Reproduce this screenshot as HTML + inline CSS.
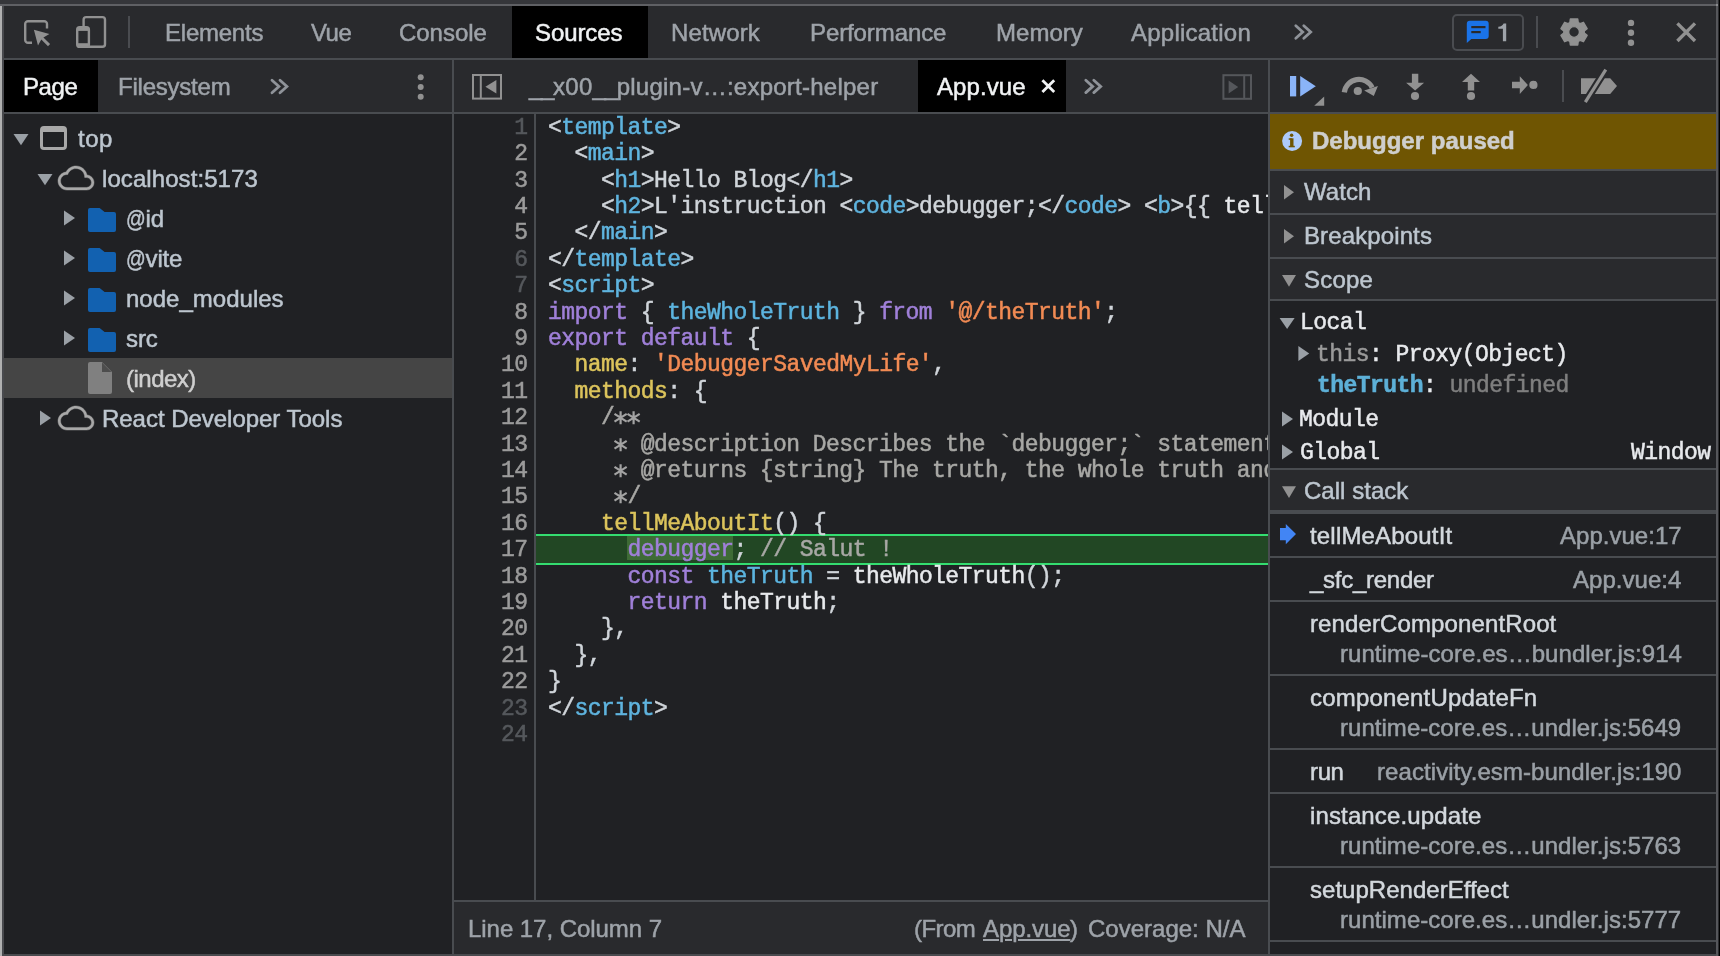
<!DOCTYPE html>
<html>
<head>
<meta charset="utf-8">
<title>DevTools - Sources</title>
<style>
*{box-sizing:border-box;margin:0;padding:0}
html,body{width:1720px;height:956px;overflow:hidden;background:#202124}
body{position:relative;font-family:"Liberation Sans",sans-serif;font-size:24px;color:#bdc6cf;line-height:28px}
.bx{position:absolute}
.t{position:absolute;white-space:pre;height:28px;line-height:28px;will-change:transform;-webkit-text-stroke:0.5px}
.tab{color:#9ea3a9}
.w{color:#f1f3f4}
.dim{color:#9aa0a6}
.m{font-family:"Liberation Mono",monospace;font-size:23px;letter-spacing:-0.558px;position:absolute;white-space:pre;height:26px;line-height:26px;color:#e8eaed;will-change:transform;-webkit-text-stroke:0.5px}
svg{position:absolute;overflow:visible}
.ln{position:absolute;left:454px;width:73.4px;text-align:right;font-family:"Liberation Mono",monospace;font-size:23px;letter-spacing:-0.558px;color:#9b9b9b;height:26px;line-height:26px;white-space:pre;will-change:transform;-webkit-text-stroke:0.5px}
.ln.d{color:#55585c}
.cl{position:absolute;left:548px;font-family:"Liberation Mono",monospace;font-size:23px;letter-spacing:-0.558px;color:#d0d5da;height:26px;line-height:26px;white-space:pre;will-change:transform;-webkit-text-stroke:0.5px}
.tg{color:#5fb4df}
.kw{color:#a080d9}
.st{color:#f28b54}
.df{color:#5cb4df}
.pr{color:#dcc45c}
.cm{color:#a8a8a5}
.wh{color:#e8eaed}
svg.as{position:relative;display:inline-block;vertical-align:top}
.at{display:inline-block;width:19.6px;transform:scaleX(.81);transform-origin:0 50%;letter-spacing:0}
</style>
</head>
<body>
<div class="bx" style="left:0px;top:0px;width:1720px;height:4px;background:#35363a;"></div>
<div class="bx" style="left:0px;top:4px;width:1720px;height:2px;background:#5f6064;"></div>
<div class="bx" style="left:0px;top:6px;width:2px;height:950px;background:#b0b0b0;"></div>
<div class="bx" style="left:2px;top:6px;width:2px;height:950px;background:#494a4e;"></div>
<div class="bx" style="left:4px;top:6px;width:1712px;height:52px;background:#292a2d;"></div>
<div class="bx" style="left:4px;top:58px;width:1712px;height:2px;background:#494c50;"></div>
<div class="bx" style="left:4px;top:60px;width:1712px;height:52px;background:#292a2d;"></div>
<div class="bx" style="left:4px;top:112px;width:1712px;height:2px;background:#494c50;"></div>
<div class="bx" style="left:452px;top:60px;width:2px;height:894px;background:#494c50;"></div>
<div class="bx" style="left:1268px;top:60px;width:2px;height:894px;background:#494c50;"></div>
<div class="bx" style="left:4px;top:954px;width:1714px;height:2px;background:#494a4e;"></div>
<svg style="left:0;top:0" width="120" height="60" viewBox="0 0 120 60" fill="none">
<path d="M47 28.5V24a2.8 2.8 0 0 0-2.8-2.8H28a2.8 2.8 0 0 0-2.8 2.8v16a2.8 2.8 0 0 0 2.8 2.8h4" stroke="#919191" stroke-width="2.4"/>
<path d="M33.9 29.7 49.4 34 43.4 37.4 50.1 44.1 48 46.2 41.3 39.5 38 45.6z" fill="#919191"/>
<rect x="83.6" y="17.1" width="21.4" height="29.7" rx="2.6" stroke="#919191" stroke-width="2.4"/>
<rect x="77.2" y="27.3" width="11.7" height="19.5" rx="2.4" fill="#292a2d" stroke="#919191" stroke-width="2.4"/>
<rect x="77.2" y="27.3" width="11.7" height="3.6" fill="#919191"/>
<rect x="77.2" y="43.2" width="11.7" height="3.6" fill="#919191"/>
</svg>
<div class="bx" style="left:128px;top:16px;width:2px;height:32px;background:#4a4c50;"></div>
<div class="bx" style="left:512px;top:6px;width:136px;height:52px;background:#000;"></div>
<div class="t tab" style="left:165.3px;top:19px;letter-spacing:-0.231px;">Elements</div>
<div class="t tab" style="left:310.5px;top:19px;letter-spacing:-0.538px;">Vue</div>
<div class="t tab" style="left:399.1px;top:19px;letter-spacing:-0.037px;">Console</div>
<div class="t tab" style="left:671.3px;top:19px;letter-spacing:0.138px;">Network</div>
<div class="t tab" style="left:809.8px;top:19px;letter-spacing:-0.099px;">Performance</div>
<div class="t tab" style="left:995.5px;top:19px;letter-spacing:0.021px;">Memory</div>
<div class="t tab" style="left:1130.5px;top:19px;letter-spacing:0.234px;">Application</div>
<div class="t w" style="left:534.7px;top:19px;letter-spacing:-0.092px;">Sources</div>
<svg style="left:0;top:0" width="1720" height="120" fill="none" stroke="#8f9399" stroke-width="2.8" stroke-linecap="round" stroke-linejoin="miter"><path d="M1295.8 25.8l6.9 6.2l-6.9 6.2M1303.8 25.8l6.9 6.2l-6.9 6.2"/></svg>
<div class="bx" style="left:1452px;top:14px;width:72px;height:37px;border:2px solid #4a4c50;border-radius:5px"></div>
<svg style="left:0;top:0" width="1720" height="60"><path d="M1469.8 20.8h15.9a3 3 0 0 1 3 3v12.2a3 3 0 0 1-3 3h-14.4l-4.5 4v-19.2a3 3 0 0 1 3-3z" fill="#1a73e8"/><rect x="1471.3" y="26" width="14.2" height="2.2" fill="#292a2d"/><rect x="1471.3" y="31" width="9.4" height="2.2" fill="#292a2d"/></svg>
<svg style="left:0;top:0" width="1720" height="60"><path d="M1502.9 41.2V28.8h-4.6v-2.1c2.7-.2 4.5-1.2 5.3-3.3h2.6v17.8z" fill="#9ea3a9"/></svg>
<div class="bx" style="left:1536px;top:16px;width:2px;height:32px;background:#4a4c50;"></div>
<svg style="left:0;top:0" width="1720" height="60"><path d="M1569.86 22.59 L1570.35 19.02 L1577.75 19.02 L1578.24 22.59 L1580.10 23.67 L1583.44 22.31 L1587.14 28.71 L1584.29 30.92 L1584.29 33.08 L1587.14 35.29 L1583.44 41.69 L1580.10 40.33 L1578.24 41.41 L1577.75 44.98 L1570.35 44.98 L1569.86 41.41 L1568.00 40.33 L1564.66 41.69 L1560.96 35.29 L1563.81 33.08 L1563.81 30.92 L1560.96 28.71 L1564.66 22.31 L1568.00 23.67Z M1568.6499999999999 32a5.4 5.4 0 1 0 10.8 0a5.4 5.4 0 1 0 -10.8 0Z" fill="#919191" fill-rule="evenodd" stroke="#919191" stroke-width="1.4" stroke-linejoin="round"/></svg>
<svg style="left:0;top:0" width="1720" height="120" fill="#919191"><circle cx="1631" cy="22.9" r="3.2"/><circle cx="1631" cy="32.7" r="3.2"/><circle cx="1631" cy="42.7" r="3.2"/></svg>
<svg style="left:0;top:0" width="1720" height="60" stroke="#919191" stroke-width="3.4"><path d="M1677.4 23.4l17.6 17.6M1695 23.4l-17.6 17.6"/></svg>
<div class="bx" style="left:4px;top:60px;width:94px;height:52px;background:#000;"></div>
<div class="t w" style="left:23.3px;top:73px;letter-spacing:-0.416px;">Page</div>
<div class="t tab" style="left:117.5px;top:73px;letter-spacing:-0.229px;">Filesystem</div>
<svg style="left:0;top:0" width="1720" height="120" fill="none" stroke="#8f9399" stroke-width="2.8" stroke-linecap="round" stroke-linejoin="miter"><path d="M272 80.3l6.9 6.2l-6.9 6.2M280.0 80.3l6.9 6.2l-6.9 6.2"/></svg>
<svg style="left:0;top:0" width="1720" height="120" fill="#919191"><circle cx="420.7" cy="77.3" r="3"/><circle cx="420.7" cy="87" r="3"/><circle cx="420.7" cy="96.8" r="3"/></svg>
<svg style="left:0;top:0" width="1720" height="120" fill="none"><rect x="473" y="75" width="28" height="23.6" stroke="#919191" stroke-width="2"/><path d="M480.8 75v23.6" stroke="#919191" stroke-width="2"/><path d="M485.4 86.7l11-6.8v13.6z" fill="#919191"/></svg>
<div class="t tab" style="left:528.7px;top:73px;letter-spacing:0.245px"><span style="letter-spacing:-1.3px">__</span>x00<span style="letter-spacing:-1.3px">__</span>plugin-v…:export-helper</div>
<div class="bx" style="left:918px;top:60px;width:148px;height:52px;background:#000;"></div>
<div class="t w" style="left:936.7px;top:73px;letter-spacing:0.075px;">App.vue</div>
<svg style="left:0;top:0" width="1720" height="120" stroke="#f1f3f4" stroke-width="2.8"><path d="M1042.4 80.2l11.8 11.8M1054.2 80.2l-11.8 11.8"/></svg>
<svg style="left:0;top:0" width="1720" height="120" fill="none" stroke="#8f9399" stroke-width="2.8" stroke-linecap="round" stroke-linejoin="miter"><path d="M1085.8 80.2l6.9 6.2l-6.9 6.2M1093.8 80.2l6.9 6.2l-6.9 6.2"/></svg>
<svg style="left:0;top:0" width="1720" height="120" fill="none"><rect x="1223.4" y="75.2" width="27.6" height="23.6" stroke="#55575b" stroke-width="2"/><path d="M1244.2 75v23.6" stroke="#55575b" stroke-width="2"/><path d="M1238.2 87l-9.6-6.6v13.2z" fill="#55575b"/></svg>
<svg style="left:0;top:0" width="1720" height="120">
<rect x="1290" y="76" width="6.2" height="20.4" fill="#8ab4f8"/>
<path d="M1300.2 76l15.6 10.2-15.6 10.2z" fill="#8ab4f8"/>
<path d="M1324.2 96.4v9.4h-10z" fill="#919191"/>
<path d="M1344.3 92.4A14.8 14.8 0 0 1 1372.2 87.6" fill="none" stroke="#919191" stroke-width="5.2"/>
<path d="M1377.9 86l-13.7 4.4 9.6 5.6z" fill="#919191"/>
<circle cx="1357.8" cy="91" r="4.1" fill="#919191"/>
<path d="M1411.9 73.8h6.4v9h5.8l-9 7.6-9-7.6h5.8z" fill="#919191"/>
<circle cx="1415" cy="96" r="4.1" fill="#919191"/>
<path d="M1467.8 90.4h6.4v-8.4h5.8l-9-8.2-9 8.2h5.8z" fill="#919191"/>
<circle cx="1471" cy="96" r="4.1" fill="#919191"/>
<path d="M1512 81.8h7.8v-5.6l8.1 8.9-8.1 8.9v-5.8h-7.8z" fill="#919191"/>
<circle cx="1533.4" cy="84.9" r="4.1" fill="#919191"/>
<path d="M1581 78.2h29.2l6.8 7.9-6.8 7.9h-29.2z" fill="#919191"/>
<path d="M1606.6 68.2l-21.7 34.5" stroke="#292a2d" stroke-width="7.4"/>
<path d="M1605.8 69.6l-20.5 32.5" stroke="#919191" stroke-width="3.2"/>
</svg>
<div class="bx" style="left:1562px;top:70px;width:2px;height:32px;background:#4a4c50;"></div>
<!--TREE-->
<div class="bx" style="left:4px;top:358px;width:448px;height:40px;background:#454545;"></div>
<svg style="left:0;top:0" width="460" height="460"><path d="M13.5 134h15l-7.5 11.2z" fill="#9aa0a6"/><rect x="41.5" y="127.5" width="24" height="21" rx="2.5" fill="none" stroke="#a8a8a8" stroke-width="3"/><rect x="41" y="127" width="25" height="5" fill="#a8a8a8"/><path d="M37.5 174h15l-7.5 11.2z" fill="#9aa0a6"/><g transform="translate(58,160) scale(1.5)"><path d="M19.35 10.04C18.67 6.59 15.64 4 12 4 9.11 4 6.6 5.64 5.35 8.04 2.34 8.36 0 10.91 0 14c0 3.31 2.69 6 6 6h13c2.76 0 5-2.24 5-5 0-2.64-2.05-4.78-4.65-4.96zM19 18.3H6c-2.38 0-4.3-1.92-4.3-4.3s1.92-4.3 4.3-4.3h.5C7.2 7.5 9.4 5.7 12 5.7c3.2 0 5.8 2.6 5.8 5.8v.2H19c1.82 0 3.3 1.48 3.3 3.3s-1.48 3.3-3.3 3.3z" fill="#a8a8a8" fill-rule="evenodd" stroke="#a8a8a8" stroke-width="0.3"/></g><path d="M64 210.5v15l11 -7.5z" fill="#9aa0a6"/><path d="M90 208h9.6l5 4h9.4a2 2 0 0 1 2 2v16a2 2 0 0 1-2 2h-24a2 2 0 0 1-2-2v-20a2 2 0 0 1 2-2z" fill="#1261b0"/><path d="M64 250.5v15l11 -7.5z" fill="#9aa0a6"/><path d="M90 248h9.6l5 4h9.4a2 2 0 0 1 2 2v16a2 2 0 0 1-2 2h-24a2 2 0 0 1-2-2v-20a2 2 0 0 1 2-2z" fill="#1261b0"/><path d="M64 290.5v15l11 -7.5z" fill="#9aa0a6"/><path d="M90 288h9.6l5 4h9.4a2 2 0 0 1 2 2v16a2 2 0 0 1-2 2h-24a2 2 0 0 1-2-2v-20a2 2 0 0 1 2-2z" fill="#1261b0"/><path d="M64 330.5v15l11 -7.5z" fill="#9aa0a6"/><path d="M90 328h9.6l5 4h9.4a2 2 0 0 1 2 2v16a2 2 0 0 1-2 2h-24a2 2 0 0 1-2-2v-20a2 2 0 0 1 2-2z" fill="#1261b0"/><path d="M90 362h12l10 10v20a2 2 0 0 1-2 2h-20a2 2 0 0 1-2-2v-28a2 2 0 0 1 2-2z" fill="#808080"/><path d="M102 362.6v9.4h9.4z" fill="#4d4d4d"/><path d="M40 410.5v15l11 -7.5z" fill="#9aa0a6"/><g transform="translate(58,400) scale(1.5)"><path d="M19.35 10.04C18.67 6.59 15.64 4 12 4 9.11 4 6.6 5.64 5.35 8.04 2.34 8.36 0 10.91 0 14c0 3.31 2.69 6 6 6h13c2.76 0 5-2.24 5-5 0-2.64-2.05-4.78-4.65-4.96zM19 18.3H6c-2.38 0-4.3-1.92-4.3-4.3s1.92-4.3 4.3-4.3h.5C7.2 7.5 9.4 5.7 12 5.7c3.2 0 5.8 2.6 5.8 5.8v.2H19c1.82 0 3.3 1.48 3.3 3.3s-1.48 3.3-3.3 3.3z" fill="#a8a8a8" fill-rule="evenodd" stroke="#a8a8a8" stroke-width="0.3"/></g></svg>
<div class="t " style="left:77.5px;top:125px;letter-spacing:0.508px;">top</div>
<div class="t " style="left:101.8px;top:165px;letter-spacing:0.080px;">localhost:5173</div>
<div class="t " style="left:125.6px;top:205px;letter-spacing:-0.243px;"><span class="at">@</span>id</div>
<div class="t " style="left:125.6px;top:245px;letter-spacing:-0.165px;"><span class="at">@</span>vite</div>
<div class="t " style="left:125.9px;top:285px;letter-spacing:0.012px;">node_modules</div>
<div class="t " style="left:125.9px;top:325px;letter-spacing:-0.100px;">src</div>
<div class="t " style="left:125.9px;top:365px;letter-spacing:-0.508px;color:#cfcfcf;">(index)</div>
<div class="t " style="left:102.1px;top:405px;letter-spacing:-0.030px;">React Developer Tools</div>
<!--CODE-->
<div class="bx" style="left:534px;top:114px;width:2px;height:786px;background:#494c50;"></div>
<div class="bx" style="left:536px;top:534px;width:732px;height:2px;background:#34dd70;"></div>
<div class="bx" style="left:536px;top:536px;width:732px;height:27px;background:#224724;"></div>
<div class="bx" style="left:536px;top:563px;width:732px;height:2px;background:#34dd70;"></div>
<div class="bx" style="left:627px;top:536px;width:106px;height:24px;background:#3e6b36;"></div>
<div class="bx" style="left:536px;top:114px;width:732px;height:786px;overflow:hidden">
</div>
<div class="ln d" style="top:115px">1</div><div class="cl" style="top:115px;max-width:720px;overflow:hidden">&lt;<span class="tg">template</span>&gt;</div>
<div class="ln " style="top:141px">2</div><div class="cl" style="top:141px;max-width:720px;overflow:hidden">  &lt;<span class="tg">main</span>&gt;</div>
<div class="ln " style="top:168px">3</div><div class="cl" style="top:168px;max-width:720px;overflow:hidden">    &lt;<span class="tg">h1</span>&gt;Hello Blog&lt;/<span class="tg">h1</span>&gt;</div>
<div class="ln " style="top:194px">4</div><div class="cl" style="top:194px;max-width:720px;overflow:hidden">    &lt;<span class="tg">h2</span>&gt;L'instruction &lt;<span class="tg">code</span>&gt;debugger;&lt;/<span class="tg">code</span>&gt; &lt;<span class="tg">b</span>&gt;{{ <span class="wh">tellMeAboutIt() }}&lt;/</span></div>
<div class="ln " style="top:220px">5</div><div class="cl" style="top:220px;max-width:720px;overflow:hidden">  &lt;/<span class="tg">main</span>&gt;</div>
<div class="ln d" style="top:247px">6</div><div class="cl" style="top:247px;max-width:720px;overflow:hidden">&lt;/<span class="tg">template</span>&gt;</div>
<div class="ln d" style="top:273px">7</div><div class="cl" style="top:273px;max-width:720px;overflow:hidden">&lt;<span class="tg">script</span>&gt;</div>
<div class="ln " style="top:300px">8</div><div class="cl" style="top:300px;max-width:720px;overflow:hidden"><span class="kw">import</span> { <span class="df">theWholeTruth</span> } <span class="kw">from</span> <span class="st">'@/theTruth'</span>;</div>
<div class="ln " style="top:326px">9</div><div class="cl" style="top:326px;max-width:720px;overflow:hidden"><span class="kw">export</span> <span class="kw">default</span> {</div>
<div class="ln " style="top:352px">10</div><div class="cl" style="top:352px;max-width:720px;overflow:hidden">  <span class="pr">name</span>: <span class="st">'DebuggerSavedMyLife'</span>,</div>
<div class="ln " style="top:379px">11</div><div class="cl" style="top:379px;max-width:720px;overflow:hidden">  <span class="pr">methods</span>: {</div>
<div class="ln " style="top:405px">12</div><div class="cl" style="top:405px;max-width:720px;overflow:hidden"><span class="cm">    /<svg class="as" width="13.2" height="26" viewBox="0 0 13.2 26" fill="none" stroke="#a3a3a3" stroke-width="2.2"><path d="M6.6 6.3v13M0.5 8.9l12.2 7.8M12.7 8.9L0.500 16.7"/></svg><svg class="as" width="13.2" height="26" viewBox="0 0 13.2 26" fill="none" stroke="#a3a3a3" stroke-width="2.2"><path d="M6.6 6.3v13M0.5 8.9l12.2 7.8M12.7 8.9L0.500 16.7"/></svg></span></div>
<div class="ln " style="top:432px">13</div><div class="cl" style="top:432px;max-width:720px;overflow:hidden"><span class="cm">     <svg class="as" width="13.2" height="26" viewBox="0 0 13.2 26" fill="none" stroke="#a3a3a3" stroke-width="2.2"><path d="M6.6 6.3v13M0.5 8.9l12.2 7.8M12.7 8.9L0.500 16.7"/></svg> @description Describes the `debugger;` statement</span></div>
<div class="ln " style="top:458px">14</div><div class="cl" style="top:458px;max-width:720px;overflow:hidden"><span class="cm">     <svg class="as" width="13.2" height="26" viewBox="0 0 13.2 26" fill="none" stroke="#a3a3a3" stroke-width="2.2"><path d="M6.6 6.3v13M0.5 8.9l12.2 7.8M12.7 8.9L0.500 16.7"/></svg> @returns {string} The truth, the whole truth and</span></div>
<div class="ln " style="top:484px">15</div><div class="cl" style="top:484px;max-width:720px;overflow:hidden"><span class="cm">     <svg class="as" width="13.2" height="26" viewBox="0 0 13.2 26" fill="none" stroke="#a3a3a3" stroke-width="2.2"><path d="M6.6 6.3v13M0.5 8.9l12.2 7.8M12.7 8.9L0.500 16.7"/></svg>/</span></div>
<div class="ln " style="top:511px">16</div><div class="cl" style="top:511px;max-width:720px;overflow:hidden">    <span class="pr">tellMeAboutIt</span>() {</div>
<div class="ln " style="top:537px">17</div><div class="cl" style="top:537px;max-width:720px;overflow:hidden">      <span class="kw">debugger</span>; <span class="cm">// Salut !</span></div>
<div class="ln " style="top:564px">18</div><div class="cl" style="top:564px;max-width:720px;overflow:hidden">      <span class="kw">const</span> <span class="df">theTruth</span> = <span class="wh">theWholeTruth</span>();</div>
<div class="ln " style="top:590px">19</div><div class="cl" style="top:590px;max-width:720px;overflow:hidden">      <span class="kw">return</span> <span class="wh">theTruth</span>;</div>
<div class="ln " style="top:616px">20</div><div class="cl" style="top:616px;max-width:720px;overflow:hidden">    },</div>
<div class="ln " style="top:643px">21</div><div class="cl" style="top:643px;max-width:720px;overflow:hidden">  },</div>
<div class="ln " style="top:669px">22</div><div class="cl" style="top:669px;max-width:720px;overflow:hidden">}</div>
<div class="ln d" style="top:696px">23</div><div class="cl" style="top:696px;max-width:720px;overflow:hidden">&lt;/<span class="tg">script</span>&gt;</div>
<div class="ln d" style="top:722px">24</div>
<div class="bx" style="left:454px;top:900px;width:814px;height:2px;background:#494c50;"></div>
<div class="bx" style="left:454px;top:902px;width:814px;height:52px;background:#292a2d;"></div>
<div class="t tab" style="left:467.7px;top:915px;letter-spacing:-0.047px;">Line 17, Column 7</div>
<div class="t tab" style="left:913.6px;top:915px;letter-spacing:-0.557px;">(From</div>
<div class="t tab" style="left:982.8px;top:915px;letter-spacing:-0.083px;text-decoration:underline;text-decoration-thickness:2px;text-underline-offset:2px;">App.vue</div>
<div class="t tab" style="left:1069.9px;top:915px;">)</div>
<div class="t tab" style="left:1087.8px;top:915px;letter-spacing:0.007px;">Coverage: N/A</div>
<!--RIGHT-->
<div class="bx" style="left:1270px;top:114px;width:446px;height:55px;background:#6f5502;"></div>
<svg style="left:0;top:0" width="1720" height="200"><circle cx="1292.1" cy="141" r="10" fill="#aecbfa"/><g fill="#6f5502"><rect x="1290.1" y="138.3" width="3.4" height="8"/><rect x="1288.7" y="138.3" width="3" height="1.5"/><rect x="1288.7" y="145.8" width="6.1" height="1.5"/><circle cx="1291.6" cy="135.3" r="1.75"/></g></svg>
<div class="t " style="left:1311.5px;top:127px;letter-spacing:0.006px;font-weight:bold;color:#cfcfcd;">Debugger paused</div>
<div class="bx" style="left:1270px;top:169px;width:446px;height:2px;background:#494c50;"></div>
<div class="bx" style="left:1270px;top:171px;width:446px;height:42px;background:#292a2d;"></div>
<div class="bx" style="left:1270px;top:213px;width:446px;height:2px;background:#494c50;"></div>
<div class="bx" style="left:1270px;top:215px;width:446px;height:42px;background:#292a2d;"></div>
<div class="bx" style="left:1270px;top:257px;width:446px;height:2px;background:#494c50;"></div>
<div class="bx" style="left:1270px;top:259px;width:446px;height:40px;background:#292a2d;"></div>
<div class="bx" style="left:1270px;top:299px;width:446px;height:2px;background:#494c50;"></div>
<div class="bx" style="left:1270px;top:468px;width:446px;height:2px;background:#494c50;"></div>
<div class="bx" style="left:1270px;top:470px;width:446px;height:40px;background:#292a2d;"></div>
<div class="bx" style="left:1270px;top:510px;width:446px;height:4px;background:#494c50;"></div>
<svg style="left:0;top:0" width="1720" height="956"><path d="M1284 185v14.4l10 -7.2z" fill="#919191"/><path d="M1284 229v14.4l10 -7.2z" fill="#919191"/><path d="M1282 275h14l-7.0 11.8z" fill="#919191"/><path d="M1282 486.2h14l-7.0 11.8z" fill="#919191"/><path d="M1279.6 318h15l-7.5 11z" fill="#9aa0a6"/><path d="M1298.4 346v15l10.8 -7.5z" fill="#9aa0a6"/><path d="M1282 411.6v15l11 -7.5z" fill="#9aa0a6"/><path d="M1282 444.5v15l11 -7.5z" fill="#9aa0a6"/><path d="M1280 528h5.8v-4l10.2 10.1-10.2 10.1v-4h-5.8z" fill="#4285f4"/></svg>
<div class="t " style="left:1303.6px;top:178px;letter-spacing:0.035px;">Watch</div>
<div class="t " style="left:1303.6px;top:222px;letter-spacing:0.114px;">Breakpoints</div>
<div class="t " style="left:1303.6px;top:266px;letter-spacing:0.188px;">Scope</div>
<div class="t " style="left:1304.1px;top:477px;letter-spacing:0.037px;">Call stack</div>
<div class="m" style="left:1300px;top:310px;">Local</div>
<div class="m" style="left:1316.2px;top:342px;"><span style="color:#9a9a9a">this</span>: Proxy(Object)</div>
<div class="m" style="left:1316.6px;top:373px;"><span style="color:#5db0d7;font-weight:bold">theTruth</span>: <span style="color:#7f7f7f">undefined</span></div>
<div class="m" style="left:1298.6px;top:407px;">Module</div>
<div class="m" style="left:1300px;top:440px;">Global</div>
<div class="m" style="left:1631px;top:440px;">Window</div>
<div class="bx" style="left:1270px;top:556px;width:446px;height:2px;background:#494c50;"></div>
<div class="t " style="left:1310.3px;top:522px;letter-spacing:0.179px;color:#d3d8dd;">tellMeAboutIt</div>
<div class="t dim" style="left:1559.8px;top:522px;letter-spacing:0.026px;">App.vue:17</div>
<div class="bx" style="left:1270px;top:600px;width:446px;height:2px;background:#494c50;"></div>
<div class="t " style="left:1310.3px;top:566px;letter-spacing:-0.268px;color:#d3d8dd;">_sfc_render</div>
<div class="t dim" style="left:1573.1px;top:566px;letter-spacing:0.034px;">App.vue:4</div>
<div class="bx" style="left:1270px;top:674px;width:446px;height:2px;background:#494c50;"></div>
<div class="t " style="left:1310.3px;top:610px;letter-spacing:0.118px;color:#d3d8dd;">renderComponentRoot</div>
<div class="t dim" style="left:1339.5px;top:640px;letter-spacing:0.061px;">runtime-core.es…bundler.js:914</div>
<div class="bx" style="left:1270px;top:748px;width:446px;height:2px;background:#494c50;"></div>
<div class="t " style="left:1310.3px;top:684px;letter-spacing:0.185px;color:#d3d8dd;">componentUpdateFn</div>
<div class="t dim" style="left:1340.3px;top:714px;letter-spacing:0.034px;">runtime-core.es…undler.js:5649</div>
<div class="bx" style="left:1270px;top:792px;width:446px;height:2px;background:#494c50;"></div>
<div class="t " style="left:1310.3px;top:758px;letter-spacing:-0.363px;color:#d3d8dd;">run</div>
<div class="t dim" style="left:1377.0px;top:758px;letter-spacing:0.074px;">reactivity.esm-bundler.js:190</div>
<div class="bx" style="left:1270px;top:866px;width:446px;height:2px;background:#494c50;"></div>
<div class="t " style="left:1310.3px;top:802px;letter-spacing:0.135px;color:#d3d8dd;">instance.update</div>
<div class="t dim" style="left:1340.3px;top:832px;letter-spacing:0.034px;">runtime-core.es…undler.js:5763</div>
<div class="bx" style="left:1270px;top:940px;width:446px;height:2px;background:#494c50;"></div>
<div class="t " style="left:1310.3px;top:876px;letter-spacing:0.020px;color:#d3d8dd;">setupRenderEffect</div>
<div class="t dim" style="left:1340.3px;top:906px;letter-spacing:0.034px;">runtime-core.es…undler.js:5777</div>
<div class="bx" style="left:1716px;top:0px;width:2px;height:956px;background:#56575b;"></div>
<div class="bx" style="left:1716px;top:4px;width:2px;height:2px;background:#8a8b8e;"></div>
<div class="bx" style="left:1718px;top:0px;width:1px;height:956px;background:#2a2b2e;"></div>
<div class="bx" style="left:1719px;top:0px;width:1px;height:956px;background:#000;"></div>
</body>
</html>
